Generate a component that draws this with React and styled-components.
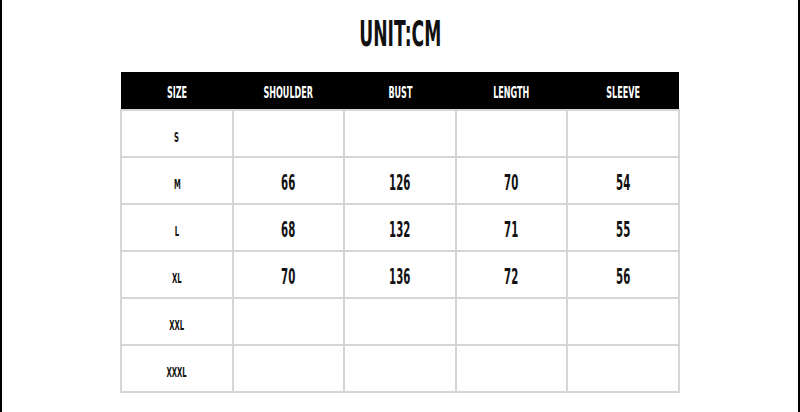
import React from "react";
import styled, { createGlobalStyle } from "styled-components";

const GlobalStyle = createGlobalStyle`
  html, body {
    margin: 0;
    padding: 0;
    background: #fff;
  }
`;

const Page = styled.div`
  box-sizing: border-box;
  width: 800px;
  height: 412px;
  border-left: 2px solid #000;
  border-right: 2px solid #000;
  background: #fff;
  display: flex;
  flex-direction: column;
  align-items: center;
  padding-top: 14px;
  font-family: "DejaVu Sans Condensed", "Liberation Sans Narrow", sans-serif;
  font-weight: bold;
  color: #111;
`;

const Title = styled.h1`
  margin: 0;
  height: 40px;
  line-height: 40px;
  font-size: 36px;
  font-weight: bold;
  display: flex;
  justify-content: center;
`;

// the reference font is very condensed, so squeeze the glyphs
const Squeeze = styled.span`
  display: inline-block;
  transform: scaleX(${(p) => p.$scale || 0.55});
`;

const Table = styled.table`
  margin-top: 18px;
  width: 560px;
  border-collapse: collapse;
  table-layout: fixed;
`;

const HeadCell = styled.th`
  background: #000;
  color: #fff;
  height: 38px;
  padding: 0;
  font-size: 16px;
  font-weight: bold;
  text-align: center;
  vertical-align: middle;
  padding-top: 4px;
  box-sizing: border-box;
`;

const Cell = styled.td`
  border: 2px solid #d6d6d6;
  height: 47px;
  padding: 0;
  text-align: center;
  vertical-align: middle;
  font-size: ${(p) => (p.$size ? "14px" : "21px")};
  padding-top: ${(p) => (p.$size ? "6px" : "4px")};
  box-sizing: border-box;
  color: #111;
`;

const columns = ["SIZE", "SHOULDER", "BUST", "LENGTH", "SLEEVE"];

const rows = [
  ["S", "", "", "", ""],
  ["M", "66", "126", "70", "54"],
  ["L", "68", "132", "71", "55"],
  ["XL", "70", "136", "72", "56"],
  ["XXL", "", "", "", ""],
  ["XXXL", "", "", "", ""],
];

const App = () => {
  return (
    <>
      <GlobalStyle />
      <Page>
        <Title>
          <Squeeze $scale={0.53}>UNIT:CM</Squeeze>
        </Title>
        <Table>
          <thead>
            <tr>
              {columns.map((c) => (
                <HeadCell key={c}>
                  <Squeeze $scale={0.56}>{c}</Squeeze>
                </HeadCell>
              ))}
            </tr>
          </thead>
          <tbody>
            {rows.map((r) => (
              <tr key={r[0]}>
                {r.map((v, i) => (
                  <Cell key={i} $size={i === 0}>
                    <Squeeze $scale={0.54}>{v}</Squeeze>
                  </Cell>
                ))}
              </tr>
            ))}
          </tbody>
        </Table>
      </Page>
    </>
  );
};

export default App;
